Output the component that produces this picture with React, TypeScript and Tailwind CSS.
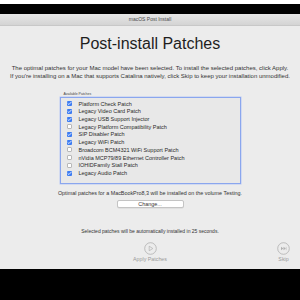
import { Check } from "lucide-react";

const patches: { name: string; on: boolean }[] = [
  { name: "Platform Check Patch", on: true },
  { name: "Legacy Video Card Patch", on: true },
  { name: "Legacy USB Support Injector", on: true },
  { name: "Legacy Platform Compatibility Patch", on: false },
  { name: "SIP Disabler Patch", on: true },
  { name: "Legacy WiFi Patch", on: true },
  { name: "Broadcom BCM4321 WiFi Support Patch", on: false },
  { name: "nVidia MCP79/89 Ethernet Controller Patch", on: false },
  { name: "IOHIDFamily Stall Patch", on: false },
  { name: "Legacy Audio Patch", on: true },
];

function Box({ on }: { on: boolean }) {
  return on ? (
    <span className="flex h-[5px] w-[5px] items-center justify-center rounded-[1px] bg-[#3d7cf2]">
      <Check className="h-[5px] w-[5px] text-white" strokeWidth={4} />
    </span>
  ) : (
    <span className="h-[5px] w-[5px] rounded-[1px] border-[0.5px] border-[#b8b8b8] bg-white" />
  );
}

export default function App() {
  return (
    <div className="flex h-[300px] w-[300px] flex-col bg-black font-['Liberation_Sans',Arial,sans-serif]">
      <div className="h-[4px] bg-white" />
      <div className="h-[10px] bg-black" />
      <div className="flex h-[12px] items-center justify-center border-b border-[#c8c8c8] bg-gradient-to-b from-[#e6e6e6] to-[#d4d4d4] text-[5px] text-[#4a4a4a]">
        macOS Post Install
      </div>
      <div className="flex h-[243px] flex-col items-center bg-[#ececec] text-[#262626]">
        <h1 className="mt-[8px] text-[16px] font-light leading-[20px] text-[#1e1e1e]">Post-install Patches</h1>
        <p className="mt-[10px] text-center text-[6px] leading-[8px] text-[#333]">
          The optimal patches for your Mac model have been selected. To install the selected patches, click Apply.
          <br />
          If you're installing on a Mac that supports Catalina natively, click Skip to keep your installation unmodified.
        </p>
        <div className="mt-[12px] w-[181px]">
          <div className="pl-[4px] text-[3.5px] leading-[5px] text-[#444]">Available Patches</div>
          <div className="flex h-[87px] flex-col border border-[#8aa6ee] bg-[#e8e8e8] px-[6px] pt-[2px] shadow-[0_0_0_0.5px_#b7c8f4]">
            {patches.map((p) => (
              <div key={p.name} className="flex h-[7.7px] items-center gap-[7px] text-[5.5px] text-[#2a2a2a]">
                <Box on={p.on} />
                <span>{p.name}</span>
              </div>
            ))}
          </div>
        </div>
        <p className="mt-[5px] text-[5.4px] leading-[8px] text-[#333]">
          Optimal patches for a MacBookPro8,3 will be installed on the volume Testing.
        </p>
        <button className="mt-[3px] flex h-[8px] w-[67px] items-center justify-center rounded-[2px] border-[0.5px] border-[#c4c4c4] bg-white text-[5.4px] text-[#333] shadow-[0_0.5px_0.5px_rgba(0,0,0,0.1)]">
          Change...
        </button>
        <p className="mt-[19px] text-[5px] leading-[8px] text-[#333]">
          Selected patches will be automatically installed in 25 seconds.
        </p>
        <div className="relative mt-[7px] w-full">
          <div className="flex flex-col items-center">
            <svg width="13" height="13" viewBox="0 0 13 13">
              <circle cx="6.5" cy="6.5" r="5.8" fill="none" stroke="#b0b0b0" strokeWidth="0.8" />
              <path d="M5.2 4.2 L8.8 6.5 L5.2 8.8 Z" fill="none" stroke="#b0b0b0" strokeWidth="0.7" strokeLinejoin="round" />
            </svg>
            <span className="mt-[1px] text-[5.3px] leading-[7px] text-[#9a9a9a]">Apply Patches</span>
          </div>
          <div className="absolute right-[10px] top-0 flex flex-col items-center">
            <svg width="13" height="13" viewBox="0 0 13 13">
              <circle cx="6.5" cy="6.5" r="5.8" fill="none" stroke="#b0b0b0" strokeWidth="0.8" />
              <path d="M4 4.8 L6.3 6.5 L4 8.2 Z M6.5 4.8 L8.8 6.5 L6.5 8.2 Z" fill="#b0b0b0" />
              <path d="M9.2 4.8 L9.2 8.2" stroke="#b0b0b0" strokeWidth="0.5" />
            </svg>
            <span className="mt-[1px] text-[5.3px] leading-[7px] text-[#9a9a9a]">Skip</span>
          </div>
        </div>
      </div>
      <div className="flex-1 bg-black" />
    </div>
  );
}
